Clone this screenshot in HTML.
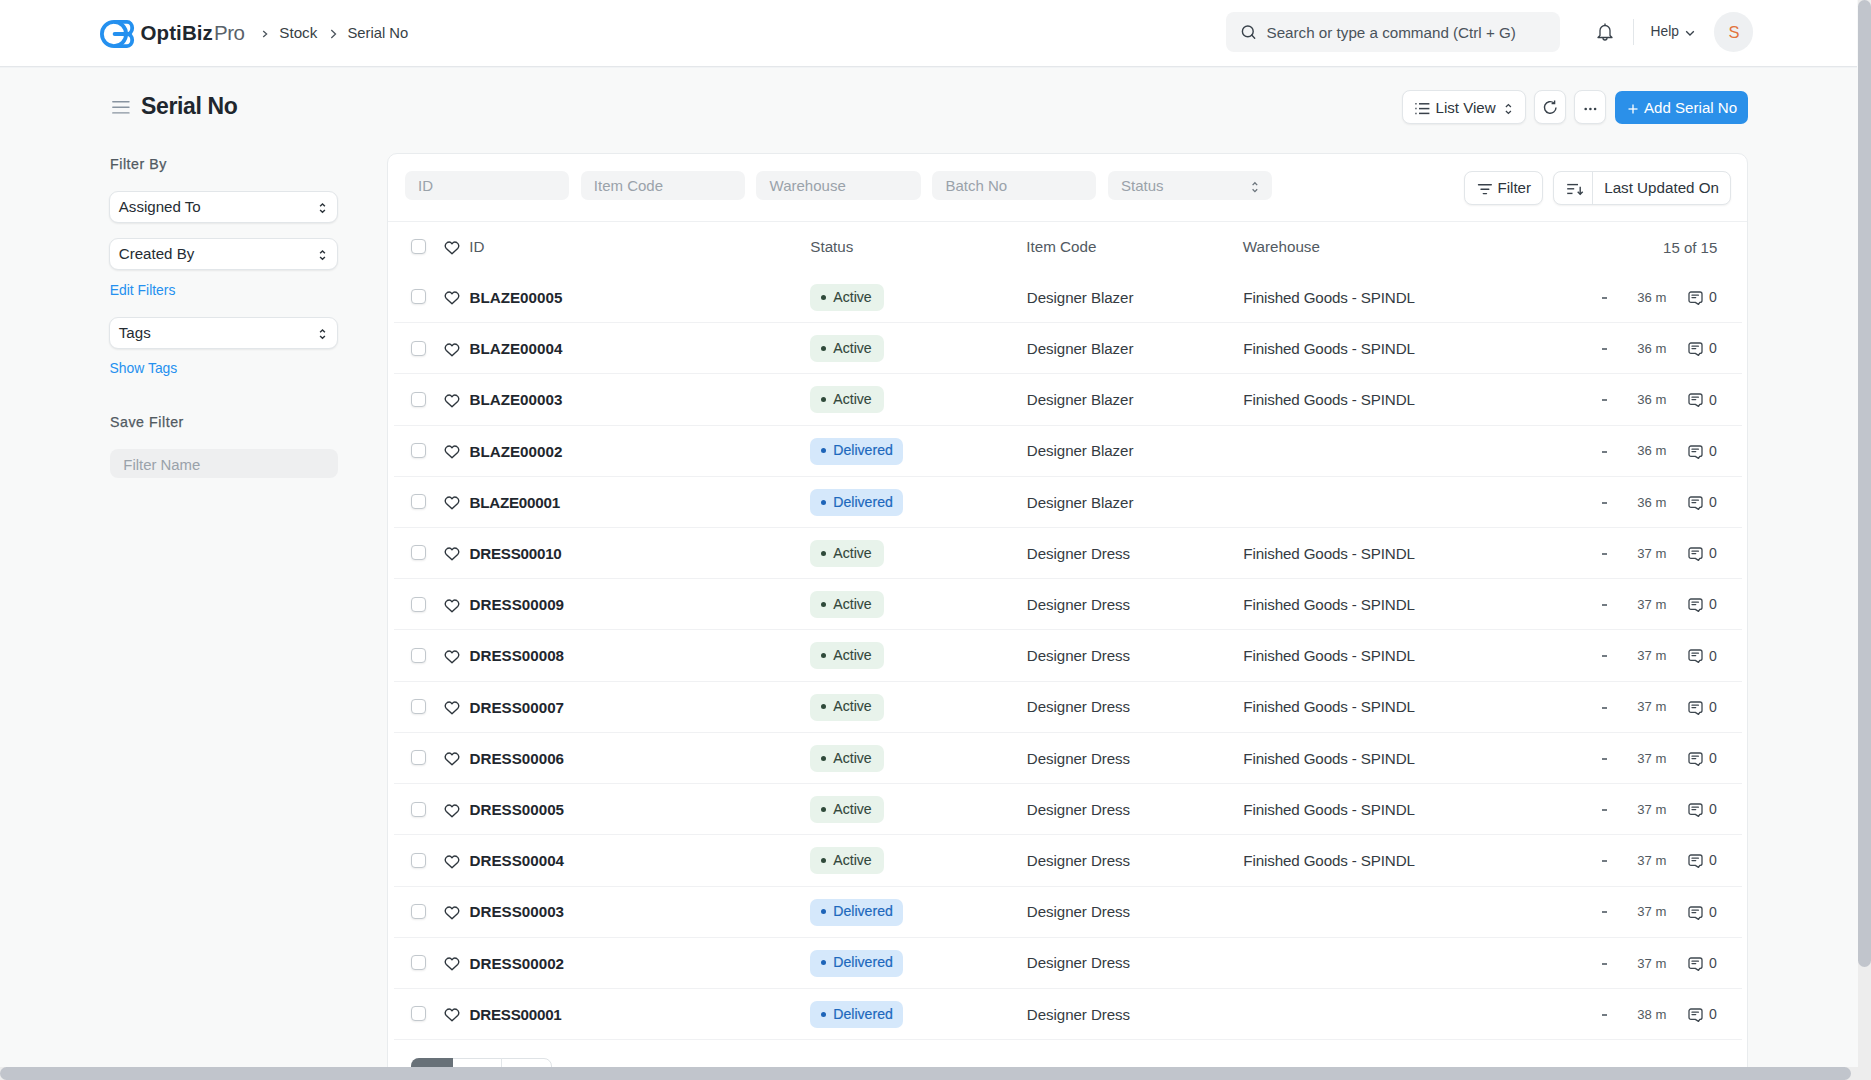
<!DOCTYPE html>
<html><head><meta charset="utf-8"><title>Serial No</title>
<style>
html,body{margin:0;padding:0;}
body{width:1871px;height:1080px;overflow:hidden;position:relative;background:#f8f9f9;font-family:"Liberation Sans", sans-serif;}
.a{position:absolute;box-sizing:border-box;}
.t{position:absolute;line-height:1;white-space:nowrap;}
svg.a{overflow:visible;}
</style></head><body>
<div class="a" style="left:0.00px;top:0.00px;width:1857.00px;height:66.00px;background:#fff;"></div>
<div class="a" style="left:0.00px;top:66.00px;width:1857.00px;height:1.00px;background:#e4e7ea;"></div>
<div class="a" style="left:0.00px;top:67.00px;width:1857.00px;height:1.00px;background:#f1f3f5;"></div>
<svg class="a" style="left:100.00px;top:20.00px;" width="35" height="28" viewBox="0 0 35 28"><g fill="none" stroke="#2490ef" stroke-width="3.8"><circle cx="14" cy="14" r="12.1"/><path d="M14 1.9 H27 A5.2 6.05 0 0 1 27 14 A5.2 6.05 0 0 1 27 26.1 H14"/><path d="M14.6 14 H30" stroke-linecap="round"/></g></svg>
<div class="t " style="left:140.50px;top:23.05px;font-size:20.5px;color:#1f272e;font-weight:bold;"><b style="letter-spacing:0.1px">OptiBiz</b><span style="font-weight:normal;color:#59626a;margin-left:1px;letter-spacing:-0.45px">Pro</span></div>
<svg class="a" style="left:262.00px;top:29.50px;" width="6" height="8" viewBox="0 0 6 8"><path d="M1.2 1 L4.6 4 L1.2 7" fill="none" stroke="#4c555d" stroke-width="1.3"/></svg>
<div class="t " style="left:279.30px;top:25.03px;font-size:15.2px;color:#383f46;font-weight:normal;">Stock</div>
<svg class="a" style="left:329.50px;top:29.00px;" width="7" height="10" viewBox="0 0 7 10"><path d="M1.3 1 L5.5 5 L1.3 9" fill="none" stroke="#4c555d" stroke-width="1.3"/></svg>
<div class="t " style="left:347.40px;top:26.07px;font-size:14.8px;color:#383f46;font-weight:normal;">Serial No</div>
<div class="a" style="left:1226.00px;top:12.00px;width:334.00px;height:40.00px;background:#f3f4f5;border-radius:8px;"></div>
<svg class="a" style="left:1241.00px;top:24.00px;" width="16" height="16" viewBox="0 0 16 16"><circle cx="6.8" cy="7.4" r="5.4" fill="none" stroke="#38414a" stroke-width="1.4"/><path d="M10.7 11.1 L13.7 14.2" stroke="#38414a" stroke-width="1.4" stroke-linecap="round"/></svg>
<div class="t " style="left:1266.50px;top:24.83px;font-size:15.2px;color:#4a535b;font-weight:normal;">Search or type a command (Ctrl + G)</div>
<svg class="a" style="left:1596.00px;top:22.00px;" width="18" height="20" viewBox="0 0 18 20"><path d="M4 13.5 V8.5 A5 5 0 0 1 14 8.5 V13.5 L16 15.5 H2 Z" fill="none" stroke="#38414a" stroke-width="1.3" stroke-linejoin="round"/><path d="M9 1.5 V3.5" stroke="#38414a" stroke-width="1.3"/><path d="M7 16 A2 2 0 0 0 11 16" fill="none" stroke="#38414a" stroke-width="1.3"/></svg>
<div class="a" style="left:1633.00px;top:19.00px;width:1.00px;height:26.00px;background:#e2e6e9;"></div>
<div class="t " style="left:1650.60px;top:25.12px;font-size:13.8px;color:#38414a;font-weight:normal;">Help</div>
<svg class="a" style="left:1685.00px;top:29.50px;" width="10" height="7" viewBox="0 0 10 7"><path d="M1.2 1.2 L5 5 L8.8 1.2" fill="none" stroke="#38414a" stroke-width="1.3"/></svg>
<div class="a" style="left:1713.50px;top:12.20px;width:39.60px;height:39.60px;background:#eef0f2;border-radius:50%;"></div>
<div class="t " style="left:1728.40px;top:24.03px;font-size:16.5px;color:#e2733d;font-weight:normal;">S</div>
<svg class="a" style="left:111.00px;top:100.00px;" width="20" height="15" viewBox="0 0 20 15"><g stroke="#8894a0" stroke-width="1.4" stroke-linecap="round"><path d="M1.8 1.8 H18"/><path d="M1.8 7.3 H18"/><path d="M1.8 12.9 H18"/></g></svg>
<div class="t " style="left:141.00px;top:94.83px;font-size:23px;color:#1f272e;font-weight:bold;letter-spacing:-0.35px;">Serial No</div>
<div class="a" style="left:1401.80px;top:90.20px;width:124.40px;height:34.20px;background:#fff;border:1px solid #e2e6e9;border-radius:8px;box-shadow:0 1px 2px rgba(0,0,0,0.06);"></div>
<svg class="a" style="left:1414.00px;top:102.00px;" width="17" height="13" viewBox="0 0 17 13"><g stroke="#38414a" stroke-width="1.5"><path d="M1.3 1.8 H2.6"/><path d="M1.3 6.6 H2.6"/><path d="M1.3 11.4 H2.6"/><path d="M5 1.8 H15.4"/><path d="M5 6.6 H15.4"/><path d="M5 11.4 H15.4"/></g></svg>
<div class="t " style="left:1435.50px;top:100.42px;font-size:15.1px;color:#2d353c;font-weight:normal;">List View</div>
<svg class="a" style="left:1504.00px;top:102.50px;" width="9" height="12" viewBox="0 0 9 12"><g fill="none" stroke="#38414a" stroke-width="1.3"><path d="M1.9 4 L4.4 1.6 L6.9 4"/><path d="M1.9 8 L4.4 10.4 L6.9 8"/></g></svg>
<div class="a" style="left:1534.20px;top:90.20px;width:32.00px;height:34.20px;background:#fff;border:1px solid #e2e6e9;border-radius:8px;box-shadow:0 1px 2px rgba(0,0,0,0.06);"></div>
<svg class="a" style="left:1542.00px;top:99.00px;" width="17" height="17" viewBox="0 0 17 17"><path d="M14 8.5 A5.8 5.8 0 1 1 11.9 4" fill="none" stroke="#38414a" stroke-width="1.4"/><path d="M12.6 1.6 V4.6 H9.6" fill="none" stroke="#38414a" stroke-width="1.4"/></svg>
<div class="a" style="left:1574.40px;top:90.20px;width:32.00px;height:34.20px;background:#fff;border:1px solid #e2e6e9;border-radius:8px;box-shadow:0 1px 2px rgba(0,0,0,0.06);"></div>
<svg class="a" style="left:1584.00px;top:106.50px;" width="13" height="4" viewBox="0 0 13 4"><g fill="#38414a"><circle cx="1.7" cy="2" r="1.3"/><circle cx="6.4" cy="2" r="1.3"/><circle cx="11.1" cy="2" r="1.3"/></g></svg>
<div class="a" style="left:1614.90px;top:90.70px;width:133.00px;height:33.30px;background:#2b90e9;border-radius:7px;"></div>
<svg class="a" style="left:1627.50px;top:104.00px;" width="10" height="10" viewBox="0 0 10 10"><g stroke="#fff" stroke-width="1.3"><path d="M5 0.5 V9.5"/><path d="M0.5 5 H9.5"/></g></svg>
<div class="t " style="left:1644.00px;top:100.32px;font-size:15.1px;color:#fff;font-weight:normal;">Add Serial No</div>
<div class="t " style="left:110.00px;top:157.28px;font-size:14.2px;color:#525a62;font-weight:normal;letter-spacing:0.55px;-webkit-text-stroke:0.25px #505a62;">Filter By</div>
<div class="a" style="left:109.30px;top:190.60px;width:229.00px;height:32.00px;background:#fff;border:1px solid #e2e6e9;border-radius:9px;box-shadow:0 1px 2px rgba(0,0,0,0.07);"></div>
<div class="t " style="left:118.80px;top:198.62px;font-size:15.1px;color:#252c33;font-weight:normal;">Assigned To</div>
<svg class="a" style="left:319.00px;top:202.60px;" width="7" height="11" viewBox="0 0 7 11"><g fill="none" stroke="#2d353c" stroke-width="1.4"><path d="M1.1 3.3 L3.5 0.9 L5.9 3.3"/><path d="M1.1 6.9 L3.5 9.3 L5.9 6.9"/></g></svg>
<div class="a" style="left:109.30px;top:238.10px;width:229.00px;height:32.00px;background:#fff;border:1px solid #e2e6e9;border-radius:9px;box-shadow:0 1px 2px rgba(0,0,0,0.07);"></div>
<div class="t " style="left:118.80px;top:246.12px;font-size:15.1px;color:#252c33;font-weight:normal;">Created By</div>
<svg class="a" style="left:319.00px;top:250.10px;" width="7" height="11" viewBox="0 0 7 11"><g fill="none" stroke="#2d353c" stroke-width="1.4"><path d="M1.1 3.3 L3.5 0.9 L5.9 3.3"/><path d="M1.1 6.9 L3.5 9.3 L5.9 6.9"/></g></svg>
<div class="t " style="left:109.80px;top:284.13px;font-size:13.9px;color:#2490ef;font-weight:normal;">Edit Filters</div>
<div class="a" style="left:109.30px;top:316.80px;width:229.00px;height:32.00px;background:#fff;border:1px solid #e2e6e9;border-radius:9px;box-shadow:0 1px 2px rgba(0,0,0,0.07);"></div>
<div class="t " style="left:118.80px;top:324.82px;font-size:15.1px;color:#252c33;font-weight:normal;">Tags</div>
<svg class="a" style="left:319.00px;top:328.80px;" width="7" height="11" viewBox="0 0 7 11"><g fill="none" stroke="#2d353c" stroke-width="1.4"><path d="M1.1 3.3 L3.5 0.9 L5.9 3.3"/><path d="M1.1 6.9 L3.5 9.3 L5.9 6.9"/></g></svg>
<div class="t " style="left:109.60px;top:362.03px;font-size:13.9px;color:#2490ef;font-weight:normal;">Show Tags</div>
<div class="t " style="left:110.00px;top:414.98px;font-size:14.2px;color:#525a62;font-weight:normal;letter-spacing:0.55px;-webkit-text-stroke:0.25px #505a62;">Save Filter</div>
<div class="a" style="left:110.00px;top:449.10px;width:228.00px;height:29.10px;background:#eeeff0;border-radius:8px;"></div>
<div class="t " style="left:123.30px;top:457.79px;font-size:14.9px;color:#9aa2aa;font-weight:normal;">Filter Name</div>
<div class="a" style="left:387.20px;top:153.30px;width:1361.00px;height:1000.00px;background:#fff;border:1px solid #e9ecee;border-radius:10px;"></div>
<div class="a" style="left:404.80px;top:171.40px;width:164.20px;height:29.00px;background:#f3f4f5;border-radius:7px;"></div>
<div class="t " style="left:418.00px;top:178.30px;font-size:15.0px;color:#9aa2aa;font-weight:normal;">ID</div>
<div class="a" style="left:580.60px;top:171.40px;width:164.20px;height:29.00px;background:#f3f4f5;border-radius:7px;"></div>
<div class="t " style="left:593.80px;top:178.30px;font-size:15.0px;color:#9aa2aa;font-weight:normal;">Item Code</div>
<div class="a" style="left:756.40px;top:171.40px;width:164.20px;height:29.00px;background:#f3f4f5;border-radius:7px;"></div>
<div class="t " style="left:769.60px;top:178.30px;font-size:15.0px;color:#9aa2aa;font-weight:normal;">Warehouse</div>
<div class="a" style="left:932.20px;top:171.40px;width:164.20px;height:29.00px;background:#f3f4f5;border-radius:7px;"></div>
<div class="t " style="left:945.40px;top:178.30px;font-size:15.0px;color:#9aa2aa;font-weight:normal;">Batch No</div>
<div class="a" style="left:1107.90px;top:171.40px;width:164.20px;height:29.00px;background:#f3f4f5;border-radius:7px;"></div>
<div class="t " style="left:1121.10px;top:178.30px;font-size:15.0px;color:#9aa2aa;font-weight:normal;">Status</div>
<svg class="a" style="left:1250.50px;top:180.80px;" width="8" height="12.5" viewBox="0 0 8 12.5"><g fill="none" stroke="#6b747c" stroke-width="1.3"><path d="M1.6 4.1 L3.9 1.7 L6.2 4.1"/><path d="M1.6 8.2 L3.9 10.6 L6.2 8.2"/></g></svg>
<div class="a" style="left:1464.00px;top:170.50px;width:79.30px;height:34.10px;background:#fff;border:1px solid #e2e6e9;border-radius:8px;box-shadow:0 1px 2px rgba(0,0,0,0.06);"></div>
<svg class="a" style="left:1476.50px;top:183.00px;" width="16" height="12" viewBox="0 0 16 12"><g stroke="#38414a" stroke-width="1.4" stroke-linecap="round"><path d="M1.5 1.7 H14.3"/><path d="M4 6.2 H11.8"/><path d="M6.3 10.6 H9.5"/></g></svg>
<div class="t " style="left:1497.50px;top:179.82px;font-size:15.1px;color:#2d353c;font-weight:normal;">Filter</div>
<div class="a" style="left:1553.40px;top:170.50px;width:177.90px;height:34.10px;background:#fff;border:1px solid #e2e6e9;border-radius:8px;box-shadow:0 1px 2px rgba(0,0,0,0.06);"></div>
<div class="a" style="left:1592.30px;top:171.00px;width:1.00px;height:33.00px;background:#e2e6e9;"></div>
<svg class="a" style="left:1565.50px;top:182.50px;" width="18" height="13" viewBox="0 0 18 13"><g stroke="#38414a" stroke-width="1.4" fill="none"><path d="M1.2 1.6 H12"/><path d="M1.2 5.8 H8.2"/><path d="M1.2 10.4 H6.5"/><path d="M14.2 3.8 V11.3"/><path d="M11.7 8.8 L14.2 11.3 L16.7 8.8"/></g></svg>
<div class="t " style="left:1604.20px;top:180.43px;font-size:15.2px;color:#2d353c;font-weight:normal;">Last Updated On</div>
<div class="a" style="left:388.00px;top:221.00px;width:1359.00px;height:1.00px;background:#eef0f2;"></div>
<div class="a" style="left:410.80px;top:239.40px;width:15.00px;height:15.00px;border:1px solid #c2c8cd;border-radius:4px;background:#fff;box-shadow:0 1px 2px rgba(0,0,0,0.08);"></div>
<svg class="a" style="left:443.60px;top:241.40px;" width="16" height="14" viewBox="0 0 16 14"><path d="M8 12.8 L2.3 7.6 C0.6 5.9 0.9 2.8 3.3 1.5 C5.1 0.6 6.9 1.3 8 2.8 C9.1 1.3 10.9 0.6 12.7 1.5 C15.1 2.8 15.4 5.9 13.7 7.6 Z" fill="none" stroke="#2d353c" stroke-width="1.4" stroke-linejoin="round"/></svg>
<div class="t " style="left:469.30px;top:239.33px;font-size:15.2px;color:#525a62;font-weight:normal;">ID</div>
<div class="t " style="left:810.30px;top:239.33px;font-size:15.2px;color:#525a62;font-weight:normal;">Status</div>
<div class="t " style="left:1026.30px;top:239.33px;font-size:15.2px;color:#525a62;font-weight:normal;">Item Code</div>
<div class="t " style="left:1242.80px;top:239.33px;font-size:15.2px;color:#525a62;font-weight:normal;">Warehouse</div>
<div class="t" style="right:153.70px;top:239.50px;font-size:15.0px;color:#525a62;font-weight:normal;">15 of 15</div>
<div class="a" style="left:410.80px;top:289.40px;width:15.00px;height:15.00px;border:1px solid #c2c8cd;border-radius:4px;background:#fff;box-shadow:0 1px 2px rgba(0,0,0,0.08);"></div>
<svg class="a" style="left:443.60px;top:291.40px;" width="16" height="14" viewBox="0 0 16 14"><path d="M8 12.8 L2.3 7.6 C0.6 5.9 0.9 2.8 3.3 1.5 C5.1 0.6 6.9 1.3 8 2.8 C9.1 1.3 10.9 0.6 12.7 1.5 C15.1 2.8 15.4 5.9 13.7 7.6 Z" fill="none" stroke="#2d353c" stroke-width="1.4" stroke-linejoin="round"/></svg>
<div class="t " style="left:469.50px;top:289.93px;font-size:15.2px;color:#1f272e;font-weight:bold;">BLAZE00005</div>
<div class="a" style="left:810.20px;top:284.00px;width:74.00px;height:27.00px;background:#e8f3eb;border-radius:7px;"></div>
<div class="a" style="left:821.10px;top:294.70px;width:5.00px;height:5.00px;background:#2f4a3a;border-radius:50%;"></div>
<div class="t " style="left:833.30px;top:289.76px;font-size:14.1px;color:#33473b;font-weight:normal;-webkit-text-stroke:0.1px #33473b;">Active</div>
<div class="t " style="left:1026.80px;top:289.72px;font-size:15.1px;color:#343b42;font-weight:normal;letter-spacing:-0.05px;">Designer Blazer</div>
<div class="t " style="left:1243.30px;top:289.73px;font-size:15.2px;color:#343b42;font-weight:normal;letter-spacing:-0.14px;">Finished Goods - SPINDL</div>
<div class="a" style="left:1602.00px;top:297.00px;width:5.00px;height:2.00px;background:#737b82;"></div>
<div class="t " style="left:1637.20px;top:290.81px;font-size:13.1px;color:#525a62;font-weight:normal;">36 m</div>
<svg class="a" style="left:1687.00px;top:290.00px;" width="17" height="16" viewBox="0 0 17 16"><path d="M4 2 H13 A2 2 0 0 1 15 4 V10.4 A2 2 0 0 1 13 12.4 H12.8 L11.5 14.4 L8.3 12.4 H4 A2 2 0 0 1 2 10.4 V4 A2 2 0 0 1 4 2 Z" fill="none" stroke="#3f4850" stroke-width="1.3" stroke-linejoin="round"/><g stroke="#3f4850" stroke-width="1.3" stroke-linecap="round"><path d="M5 5.2 H11.4"/><path d="M5 7.6 H8.7"/></g></svg>
<div class="t " style="left:1708.90px;top:290.16px;font-size:14.1px;color:#3f4850;font-weight:normal;">0</div>
<div class="a" style="left:394.00px;top:322.20px;width:1348.00px;height:1.00px;background:#f0f1f3;"></div>
<div class="a" style="left:410.80px;top:340.61px;width:15.00px;height:15.00px;border:1px solid #c2c8cd;border-radius:4px;background:#fff;box-shadow:0 1px 2px rgba(0,0,0,0.08);"></div>
<svg class="a" style="left:443.60px;top:342.61px;" width="16" height="14" viewBox="0 0 16 14"><path d="M8 12.8 L2.3 7.6 C0.6 5.9 0.9 2.8 3.3 1.5 C5.1 0.6 6.9 1.3 8 2.8 C9.1 1.3 10.9 0.6 12.7 1.5 C15.1 2.8 15.4 5.9 13.7 7.6 Z" fill="none" stroke="#2d353c" stroke-width="1.4" stroke-linejoin="round"/></svg>
<div class="t " style="left:469.50px;top:341.14px;font-size:15.2px;color:#1f272e;font-weight:bold;">BLAZE00004</div>
<div class="a" style="left:810.20px;top:335.21px;width:74.00px;height:27.00px;background:#e8f3eb;border-radius:7px;"></div>
<div class="a" style="left:821.10px;top:345.91px;width:5.00px;height:5.00px;background:#2f4a3a;border-radius:50%;"></div>
<div class="t " style="left:833.30px;top:340.97px;font-size:14.1px;color:#33473b;font-weight:normal;-webkit-text-stroke:0.1px #33473b;">Active</div>
<div class="t " style="left:1026.80px;top:340.93px;font-size:15.1px;color:#343b42;font-weight:normal;letter-spacing:-0.05px;">Designer Blazer</div>
<div class="t " style="left:1243.30px;top:340.94px;font-size:15.2px;color:#343b42;font-weight:normal;letter-spacing:-0.14px;">Finished Goods - SPINDL</div>
<div class="a" style="left:1602.00px;top:348.00px;width:5.00px;height:2.00px;background:#737b82;"></div>
<div class="t " style="left:1637.20px;top:342.02px;font-size:13.1px;color:#525a62;font-weight:normal;">36 m</div>
<svg class="a" style="left:1687.00px;top:341.21px;" width="17" height="16" viewBox="0 0 17 16"><path d="M4 2 H13 A2 2 0 0 1 15 4 V10.4 A2 2 0 0 1 13 12.4 H12.8 L11.5 14.4 L8.3 12.4 H4 A2 2 0 0 1 2 10.4 V4 A2 2 0 0 1 4 2 Z" fill="none" stroke="#3f4850" stroke-width="1.3" stroke-linejoin="round"/><g stroke="#3f4850" stroke-width="1.3" stroke-linecap="round"><path d="M5 5.2 H11.4"/><path d="M5 7.6 H8.7"/></g></svg>
<div class="t " style="left:1708.90px;top:341.37px;font-size:14.1px;color:#3f4850;font-weight:normal;">0</div>
<div class="a" style="left:394.00px;top:373.41px;width:1348.00px;height:1.00px;background:#f0f1f3;"></div>
<div class="a" style="left:410.80px;top:391.82px;width:15.00px;height:15.00px;border:1px solid #c2c8cd;border-radius:4px;background:#fff;box-shadow:0 1px 2px rgba(0,0,0,0.08);"></div>
<svg class="a" style="left:443.60px;top:393.82px;" width="16" height="14" viewBox="0 0 16 14"><path d="M8 12.8 L2.3 7.6 C0.6 5.9 0.9 2.8 3.3 1.5 C5.1 0.6 6.9 1.3 8 2.8 C9.1 1.3 10.9 0.6 12.7 1.5 C15.1 2.8 15.4 5.9 13.7 7.6 Z" fill="none" stroke="#2d353c" stroke-width="1.4" stroke-linejoin="round"/></svg>
<div class="t " style="left:469.50px;top:392.35px;font-size:15.2px;color:#1f272e;font-weight:bold;">BLAZE00003</div>
<div class="a" style="left:810.20px;top:386.42px;width:74.00px;height:27.00px;background:#e8f3eb;border-radius:7px;"></div>
<div class="a" style="left:821.10px;top:397.12px;width:5.00px;height:5.00px;background:#2f4a3a;border-radius:50%;"></div>
<div class="t " style="left:833.30px;top:392.18px;font-size:14.1px;color:#33473b;font-weight:normal;-webkit-text-stroke:0.1px #33473b;">Active</div>
<div class="t " style="left:1026.80px;top:392.14px;font-size:15.1px;color:#343b42;font-weight:normal;letter-spacing:-0.05px;">Designer Blazer</div>
<div class="t " style="left:1243.30px;top:392.15px;font-size:15.2px;color:#343b42;font-weight:normal;letter-spacing:-0.14px;">Finished Goods - SPINDL</div>
<div class="a" style="left:1602.00px;top:399.00px;width:5.00px;height:2.00px;background:#737b82;"></div>
<div class="t " style="left:1637.20px;top:393.23px;font-size:13.1px;color:#525a62;font-weight:normal;">36 m</div>
<svg class="a" style="left:1687.00px;top:392.42px;" width="17" height="16" viewBox="0 0 17 16"><path d="M4 2 H13 A2 2 0 0 1 15 4 V10.4 A2 2 0 0 1 13 12.4 H12.8 L11.5 14.4 L8.3 12.4 H4 A2 2 0 0 1 2 10.4 V4 A2 2 0 0 1 4 2 Z" fill="none" stroke="#3f4850" stroke-width="1.3" stroke-linejoin="round"/><g stroke="#3f4850" stroke-width="1.3" stroke-linecap="round"><path d="M5 5.2 H11.4"/><path d="M5 7.6 H8.7"/></g></svg>
<div class="t " style="left:1708.90px;top:392.58px;font-size:14.1px;color:#3f4850;font-weight:normal;">0</div>
<div class="a" style="left:394.00px;top:424.62px;width:1348.00px;height:1.00px;background:#f0f1f3;"></div>
<div class="a" style="left:410.80px;top:443.03px;width:15.00px;height:15.00px;border:1px solid #c2c8cd;border-radius:4px;background:#fff;box-shadow:0 1px 2px rgba(0,0,0,0.08);"></div>
<svg class="a" style="left:443.60px;top:445.03px;" width="16" height="14" viewBox="0 0 16 14"><path d="M8 12.8 L2.3 7.6 C0.6 5.9 0.9 2.8 3.3 1.5 C5.1 0.6 6.9 1.3 8 2.8 C9.1 1.3 10.9 0.6 12.7 1.5 C15.1 2.8 15.4 5.9 13.7 7.6 Z" fill="none" stroke="#2d353c" stroke-width="1.4" stroke-linejoin="round"/></svg>
<div class="t " style="left:469.50px;top:443.56px;font-size:15.2px;color:#1f272e;font-weight:bold;">BLAZE00002</div>
<div class="a" style="left:810.20px;top:437.63px;width:93.30px;height:27.00px;background:#d5e8fb;border-radius:7px;"></div>
<div class="a" style="left:821.10px;top:448.33px;width:5.00px;height:5.00px;background:#1d64b8;border-radius:50%;"></div>
<div class="t " style="left:833.30px;top:443.39px;font-size:14.1px;color:#1d68bd;font-weight:normal;-webkit-text-stroke:0.2px #1d68bd;">Delivered</div>
<div class="t " style="left:1026.80px;top:443.35px;font-size:15.1px;color:#343b42;font-weight:normal;letter-spacing:-0.05px;">Designer Blazer</div>
<div class="a" style="left:1602.00px;top:451.00px;width:5.00px;height:2.00px;background:#737b82;"></div>
<div class="t " style="left:1637.20px;top:444.44px;font-size:13.1px;color:#525a62;font-weight:normal;">36 m</div>
<svg class="a" style="left:1687.00px;top:443.63px;" width="17" height="16" viewBox="0 0 17 16"><path d="M4 2 H13 A2 2 0 0 1 15 4 V10.4 A2 2 0 0 1 13 12.4 H12.8 L11.5 14.4 L8.3 12.4 H4 A2 2 0 0 1 2 10.4 V4 A2 2 0 0 1 4 2 Z" fill="none" stroke="#3f4850" stroke-width="1.3" stroke-linejoin="round"/><g stroke="#3f4850" stroke-width="1.3" stroke-linecap="round"><path d="M5 5.2 H11.4"/><path d="M5 7.6 H8.7"/></g></svg>
<div class="t " style="left:1708.90px;top:443.79px;font-size:14.1px;color:#3f4850;font-weight:normal;">0</div>
<div class="a" style="left:394.00px;top:475.83px;width:1348.00px;height:1.00px;background:#f0f1f3;"></div>
<div class="a" style="left:410.80px;top:494.24px;width:15.00px;height:15.00px;border:1px solid #c2c8cd;border-radius:4px;background:#fff;box-shadow:0 1px 2px rgba(0,0,0,0.08);"></div>
<svg class="a" style="left:443.60px;top:496.24px;" width="16" height="14" viewBox="0 0 16 14"><path d="M8 12.8 L2.3 7.6 C0.6 5.9 0.9 2.8 3.3 1.5 C5.1 0.6 6.9 1.3 8 2.8 C9.1 1.3 10.9 0.6 12.7 1.5 C15.1 2.8 15.4 5.9 13.7 7.6 Z" fill="none" stroke="#2d353c" stroke-width="1.4" stroke-linejoin="round"/></svg>
<div class="t " style="left:469.50px;top:494.77px;font-size:15.2px;color:#1f272e;font-weight:bold;letter-spacing:-0.25px;">BLAZE00001</div>
<div class="a" style="left:810.20px;top:488.84px;width:93.30px;height:27.00px;background:#d5e8fb;border-radius:7px;"></div>
<div class="a" style="left:821.10px;top:499.54px;width:5.00px;height:5.00px;background:#1d64b8;border-radius:50%;"></div>
<div class="t " style="left:833.30px;top:494.60px;font-size:14.1px;color:#1d68bd;font-weight:normal;-webkit-text-stroke:0.2px #1d68bd;">Delivered</div>
<div class="t " style="left:1026.80px;top:494.56px;font-size:15.1px;color:#343b42;font-weight:normal;letter-spacing:-0.05px;">Designer Blazer</div>
<div class="a" style="left:1602.00px;top:502.00px;width:5.00px;height:2.00px;background:#737b82;"></div>
<div class="t " style="left:1637.20px;top:495.65px;font-size:13.1px;color:#525a62;font-weight:normal;">36 m</div>
<svg class="a" style="left:1687.00px;top:494.84px;" width="17" height="16" viewBox="0 0 17 16"><path d="M4 2 H13 A2 2 0 0 1 15 4 V10.4 A2 2 0 0 1 13 12.4 H12.8 L11.5 14.4 L8.3 12.4 H4 A2 2 0 0 1 2 10.4 V4 A2 2 0 0 1 4 2 Z" fill="none" stroke="#3f4850" stroke-width="1.3" stroke-linejoin="round"/><g stroke="#3f4850" stroke-width="1.3" stroke-linecap="round"><path d="M5 5.2 H11.4"/><path d="M5 7.6 H8.7"/></g></svg>
<div class="t " style="left:1708.90px;top:495.00px;font-size:14.1px;color:#3f4850;font-weight:normal;">0</div>
<div class="a" style="left:394.00px;top:527.04px;width:1348.00px;height:1.00px;background:#f0f1f3;"></div>
<div class="a" style="left:410.80px;top:545.45px;width:15.00px;height:15.00px;border:1px solid #c2c8cd;border-radius:4px;background:#fff;box-shadow:0 1px 2px rgba(0,0,0,0.08);"></div>
<svg class="a" style="left:443.60px;top:547.45px;" width="16" height="14" viewBox="0 0 16 14"><path d="M8 12.8 L2.3 7.6 C0.6 5.9 0.9 2.8 3.3 1.5 C5.1 0.6 6.9 1.3 8 2.8 C9.1 1.3 10.9 0.6 12.7 1.5 C15.1 2.8 15.4 5.9 13.7 7.6 Z" fill="none" stroke="#2d353c" stroke-width="1.4" stroke-linejoin="round"/></svg>
<div class="t " style="left:469.50px;top:545.98px;font-size:15.2px;color:#1f272e;font-weight:bold;letter-spacing:-0.25px;">DRESS00010</div>
<div class="a" style="left:810.20px;top:540.05px;width:74.00px;height:27.00px;background:#e8f3eb;border-radius:7px;"></div>
<div class="a" style="left:821.10px;top:550.75px;width:5.00px;height:5.00px;background:#2f4a3a;border-radius:50%;"></div>
<div class="t " style="left:833.30px;top:545.81px;font-size:14.1px;color:#33473b;font-weight:normal;-webkit-text-stroke:0.1px #33473b;">Active</div>
<div class="t " style="left:1026.80px;top:545.77px;font-size:15.1px;color:#343b42;font-weight:normal;letter-spacing:-0.05px;">Designer Dress</div>
<div class="t " style="left:1243.30px;top:545.78px;font-size:15.2px;color:#343b42;font-weight:normal;letter-spacing:-0.14px;">Finished Goods - SPINDL</div>
<div class="a" style="left:1602.00px;top:553.00px;width:5.00px;height:2.00px;background:#737b82;"></div>
<div class="t " style="left:1637.20px;top:546.86px;font-size:13.1px;color:#525a62;font-weight:normal;">37 m</div>
<svg class="a" style="left:1687.00px;top:546.05px;" width="17" height="16" viewBox="0 0 17 16"><path d="M4 2 H13 A2 2 0 0 1 15 4 V10.4 A2 2 0 0 1 13 12.4 H12.8 L11.5 14.4 L8.3 12.4 H4 A2 2 0 0 1 2 10.4 V4 A2 2 0 0 1 4 2 Z" fill="none" stroke="#3f4850" stroke-width="1.3" stroke-linejoin="round"/><g stroke="#3f4850" stroke-width="1.3" stroke-linecap="round"><path d="M5 5.2 H11.4"/><path d="M5 7.6 H8.7"/></g></svg>
<div class="t " style="left:1708.90px;top:546.21px;font-size:14.1px;color:#3f4850;font-weight:normal;">0</div>
<div class="a" style="left:394.00px;top:578.25px;width:1348.00px;height:1.00px;background:#f0f1f3;"></div>
<div class="a" style="left:410.80px;top:596.66px;width:15.00px;height:15.00px;border:1px solid #c2c8cd;border-radius:4px;background:#fff;box-shadow:0 1px 2px rgba(0,0,0,0.08);"></div>
<svg class="a" style="left:443.60px;top:598.66px;" width="16" height="14" viewBox="0 0 16 14"><path d="M8 12.8 L2.3 7.6 C0.6 5.9 0.9 2.8 3.3 1.5 C5.1 0.6 6.9 1.3 8 2.8 C9.1 1.3 10.9 0.6 12.7 1.5 C15.1 2.8 15.4 5.9 13.7 7.6 Z" fill="none" stroke="#2d353c" stroke-width="1.4" stroke-linejoin="round"/></svg>
<div class="t " style="left:469.50px;top:597.19px;font-size:15.2px;color:#1f272e;font-weight:bold;">DRESS00009</div>
<div class="a" style="left:810.20px;top:591.26px;width:74.00px;height:27.00px;background:#e8f3eb;border-radius:7px;"></div>
<div class="a" style="left:821.10px;top:601.96px;width:5.00px;height:5.00px;background:#2f4a3a;border-radius:50%;"></div>
<div class="t " style="left:833.30px;top:597.02px;font-size:14.1px;color:#33473b;font-weight:normal;-webkit-text-stroke:0.1px #33473b;">Active</div>
<div class="t " style="left:1026.80px;top:596.98px;font-size:15.1px;color:#343b42;font-weight:normal;letter-spacing:-0.05px;">Designer Dress</div>
<div class="t " style="left:1243.30px;top:596.99px;font-size:15.2px;color:#343b42;font-weight:normal;letter-spacing:-0.14px;">Finished Goods - SPINDL</div>
<div class="a" style="left:1602.00px;top:604.00px;width:5.00px;height:2.00px;background:#737b82;"></div>
<div class="t " style="left:1637.20px;top:598.07px;font-size:13.1px;color:#525a62;font-weight:normal;">37 m</div>
<svg class="a" style="left:1687.00px;top:597.26px;" width="17" height="16" viewBox="0 0 17 16"><path d="M4 2 H13 A2 2 0 0 1 15 4 V10.4 A2 2 0 0 1 13 12.4 H12.8 L11.5 14.4 L8.3 12.4 H4 A2 2 0 0 1 2 10.4 V4 A2 2 0 0 1 4 2 Z" fill="none" stroke="#3f4850" stroke-width="1.3" stroke-linejoin="round"/><g stroke="#3f4850" stroke-width="1.3" stroke-linecap="round"><path d="M5 5.2 H11.4"/><path d="M5 7.6 H8.7"/></g></svg>
<div class="t " style="left:1708.90px;top:597.42px;font-size:14.1px;color:#3f4850;font-weight:normal;">0</div>
<div class="a" style="left:394.00px;top:629.46px;width:1348.00px;height:1.00px;background:#f0f1f3;"></div>
<div class="a" style="left:410.80px;top:647.87px;width:15.00px;height:15.00px;border:1px solid #c2c8cd;border-radius:4px;background:#fff;box-shadow:0 1px 2px rgba(0,0,0,0.08);"></div>
<svg class="a" style="left:443.60px;top:649.87px;" width="16" height="14" viewBox="0 0 16 14"><path d="M8 12.8 L2.3 7.6 C0.6 5.9 0.9 2.8 3.3 1.5 C5.1 0.6 6.9 1.3 8 2.8 C9.1 1.3 10.9 0.6 12.7 1.5 C15.1 2.8 15.4 5.9 13.7 7.6 Z" fill="none" stroke="#2d353c" stroke-width="1.4" stroke-linejoin="round"/></svg>
<div class="t " style="left:469.50px;top:648.40px;font-size:15.2px;color:#1f272e;font-weight:bold;">DRESS00008</div>
<div class="a" style="left:810.20px;top:642.47px;width:74.00px;height:27.00px;background:#e8f3eb;border-radius:7px;"></div>
<div class="a" style="left:821.10px;top:653.17px;width:5.00px;height:5.00px;background:#2f4a3a;border-radius:50%;"></div>
<div class="t " style="left:833.30px;top:648.23px;font-size:14.1px;color:#33473b;font-weight:normal;-webkit-text-stroke:0.1px #33473b;">Active</div>
<div class="t " style="left:1026.80px;top:648.19px;font-size:15.1px;color:#343b42;font-weight:normal;letter-spacing:-0.05px;">Designer Dress</div>
<div class="t " style="left:1243.30px;top:648.20px;font-size:15.2px;color:#343b42;font-weight:normal;letter-spacing:-0.14px;">Finished Goods - SPINDL</div>
<div class="a" style="left:1602.00px;top:655.00px;width:5.00px;height:2.00px;background:#737b82;"></div>
<div class="t " style="left:1637.20px;top:649.28px;font-size:13.1px;color:#525a62;font-weight:normal;">37 m</div>
<svg class="a" style="left:1687.00px;top:648.47px;" width="17" height="16" viewBox="0 0 17 16"><path d="M4 2 H13 A2 2 0 0 1 15 4 V10.4 A2 2 0 0 1 13 12.4 H12.8 L11.5 14.4 L8.3 12.4 H4 A2 2 0 0 1 2 10.4 V4 A2 2 0 0 1 4 2 Z" fill="none" stroke="#3f4850" stroke-width="1.3" stroke-linejoin="round"/><g stroke="#3f4850" stroke-width="1.3" stroke-linecap="round"><path d="M5 5.2 H11.4"/><path d="M5 7.6 H8.7"/></g></svg>
<div class="t " style="left:1708.90px;top:648.63px;font-size:14.1px;color:#3f4850;font-weight:normal;">0</div>
<div class="a" style="left:394.00px;top:680.67px;width:1348.00px;height:1.00px;background:#f0f1f3;"></div>
<div class="a" style="left:410.80px;top:699.08px;width:15.00px;height:15.00px;border:1px solid #c2c8cd;border-radius:4px;background:#fff;box-shadow:0 1px 2px rgba(0,0,0,0.08);"></div>
<svg class="a" style="left:443.60px;top:701.08px;" width="16" height="14" viewBox="0 0 16 14"><path d="M8 12.8 L2.3 7.6 C0.6 5.9 0.9 2.8 3.3 1.5 C5.1 0.6 6.9 1.3 8 2.8 C9.1 1.3 10.9 0.6 12.7 1.5 C15.1 2.8 15.4 5.9 13.7 7.6 Z" fill="none" stroke="#2d353c" stroke-width="1.4" stroke-linejoin="round"/></svg>
<div class="t " style="left:469.50px;top:699.61px;font-size:15.2px;color:#1f272e;font-weight:bold;">DRESS00007</div>
<div class="a" style="left:810.20px;top:693.68px;width:74.00px;height:27.00px;background:#e8f3eb;border-radius:7px;"></div>
<div class="a" style="left:821.10px;top:704.38px;width:5.00px;height:5.00px;background:#2f4a3a;border-radius:50%;"></div>
<div class="t " style="left:833.30px;top:699.44px;font-size:14.1px;color:#33473b;font-weight:normal;-webkit-text-stroke:0.1px #33473b;">Active</div>
<div class="t " style="left:1026.80px;top:699.40px;font-size:15.1px;color:#343b42;font-weight:normal;letter-spacing:-0.05px;">Designer Dress</div>
<div class="t " style="left:1243.30px;top:699.41px;font-size:15.2px;color:#343b42;font-weight:normal;letter-spacing:-0.14px;">Finished Goods - SPINDL</div>
<div class="a" style="left:1602.00px;top:707.00px;width:5.00px;height:2.00px;background:#737b82;"></div>
<div class="t " style="left:1637.20px;top:700.49px;font-size:13.1px;color:#525a62;font-weight:normal;">37 m</div>
<svg class="a" style="left:1687.00px;top:699.68px;" width="17" height="16" viewBox="0 0 17 16"><path d="M4 2 H13 A2 2 0 0 1 15 4 V10.4 A2 2 0 0 1 13 12.4 H12.8 L11.5 14.4 L8.3 12.4 H4 A2 2 0 0 1 2 10.4 V4 A2 2 0 0 1 4 2 Z" fill="none" stroke="#3f4850" stroke-width="1.3" stroke-linejoin="round"/><g stroke="#3f4850" stroke-width="1.3" stroke-linecap="round"><path d="M5 5.2 H11.4"/><path d="M5 7.6 H8.7"/></g></svg>
<div class="t " style="left:1708.90px;top:699.84px;font-size:14.1px;color:#3f4850;font-weight:normal;">0</div>
<div class="a" style="left:394.00px;top:731.88px;width:1348.00px;height:1.00px;background:#f0f1f3;"></div>
<div class="a" style="left:410.80px;top:750.29px;width:15.00px;height:15.00px;border:1px solid #c2c8cd;border-radius:4px;background:#fff;box-shadow:0 1px 2px rgba(0,0,0,0.08);"></div>
<svg class="a" style="left:443.60px;top:752.29px;" width="16" height="14" viewBox="0 0 16 14"><path d="M8 12.8 L2.3 7.6 C0.6 5.9 0.9 2.8 3.3 1.5 C5.1 0.6 6.9 1.3 8 2.8 C9.1 1.3 10.9 0.6 12.7 1.5 C15.1 2.8 15.4 5.9 13.7 7.6 Z" fill="none" stroke="#2d353c" stroke-width="1.4" stroke-linejoin="round"/></svg>
<div class="t " style="left:469.50px;top:750.82px;font-size:15.2px;color:#1f272e;font-weight:bold;">DRESS00006</div>
<div class="a" style="left:810.20px;top:744.89px;width:74.00px;height:27.00px;background:#e8f3eb;border-radius:7px;"></div>
<div class="a" style="left:821.10px;top:755.59px;width:5.00px;height:5.00px;background:#2f4a3a;border-radius:50%;"></div>
<div class="t " style="left:833.30px;top:750.65px;font-size:14.1px;color:#33473b;font-weight:normal;-webkit-text-stroke:0.1px #33473b;">Active</div>
<div class="t " style="left:1026.80px;top:750.61px;font-size:15.1px;color:#343b42;font-weight:normal;letter-spacing:-0.05px;">Designer Dress</div>
<div class="t " style="left:1243.30px;top:750.62px;font-size:15.2px;color:#343b42;font-weight:normal;letter-spacing:-0.14px;">Finished Goods - SPINDL</div>
<div class="a" style="left:1602.00px;top:758.00px;width:5.00px;height:2.00px;background:#737b82;"></div>
<div class="t " style="left:1637.20px;top:751.70px;font-size:13.1px;color:#525a62;font-weight:normal;">37 m</div>
<svg class="a" style="left:1687.00px;top:750.89px;" width="17" height="16" viewBox="0 0 17 16"><path d="M4 2 H13 A2 2 0 0 1 15 4 V10.4 A2 2 0 0 1 13 12.4 H12.8 L11.5 14.4 L8.3 12.4 H4 A2 2 0 0 1 2 10.4 V4 A2 2 0 0 1 4 2 Z" fill="none" stroke="#3f4850" stroke-width="1.3" stroke-linejoin="round"/><g stroke="#3f4850" stroke-width="1.3" stroke-linecap="round"><path d="M5 5.2 H11.4"/><path d="M5 7.6 H8.7"/></g></svg>
<div class="t " style="left:1708.90px;top:751.05px;font-size:14.1px;color:#3f4850;font-weight:normal;">0</div>
<div class="a" style="left:394.00px;top:783.09px;width:1348.00px;height:1.00px;background:#f0f1f3;"></div>
<div class="a" style="left:410.80px;top:801.50px;width:15.00px;height:15.00px;border:1px solid #c2c8cd;border-radius:4px;background:#fff;box-shadow:0 1px 2px rgba(0,0,0,0.08);"></div>
<svg class="a" style="left:443.60px;top:803.50px;" width="16" height="14" viewBox="0 0 16 14"><path d="M8 12.8 L2.3 7.6 C0.6 5.9 0.9 2.8 3.3 1.5 C5.1 0.6 6.9 1.3 8 2.8 C9.1 1.3 10.9 0.6 12.7 1.5 C15.1 2.8 15.4 5.9 13.7 7.6 Z" fill="none" stroke="#2d353c" stroke-width="1.4" stroke-linejoin="round"/></svg>
<div class="t " style="left:469.50px;top:802.03px;font-size:15.2px;color:#1f272e;font-weight:bold;">DRESS00005</div>
<div class="a" style="left:810.20px;top:796.10px;width:74.00px;height:27.00px;background:#e8f3eb;border-radius:7px;"></div>
<div class="a" style="left:821.10px;top:806.80px;width:5.00px;height:5.00px;background:#2f4a3a;border-radius:50%;"></div>
<div class="t " style="left:833.30px;top:801.86px;font-size:14.1px;color:#33473b;font-weight:normal;-webkit-text-stroke:0.1px #33473b;">Active</div>
<div class="t " style="left:1026.80px;top:801.82px;font-size:15.1px;color:#343b42;font-weight:normal;letter-spacing:-0.05px;">Designer Dress</div>
<div class="t " style="left:1243.30px;top:801.83px;font-size:15.2px;color:#343b42;font-weight:normal;letter-spacing:-0.14px;">Finished Goods - SPINDL</div>
<div class="a" style="left:1602.00px;top:809.00px;width:5.00px;height:2.00px;background:#737b82;"></div>
<div class="t " style="left:1637.20px;top:802.91px;font-size:13.1px;color:#525a62;font-weight:normal;">37 m</div>
<svg class="a" style="left:1687.00px;top:802.10px;" width="17" height="16" viewBox="0 0 17 16"><path d="M4 2 H13 A2 2 0 0 1 15 4 V10.4 A2 2 0 0 1 13 12.4 H12.8 L11.5 14.4 L8.3 12.4 H4 A2 2 0 0 1 2 10.4 V4 A2 2 0 0 1 4 2 Z" fill="none" stroke="#3f4850" stroke-width="1.3" stroke-linejoin="round"/><g stroke="#3f4850" stroke-width="1.3" stroke-linecap="round"><path d="M5 5.2 H11.4"/><path d="M5 7.6 H8.7"/></g></svg>
<div class="t " style="left:1708.90px;top:802.26px;font-size:14.1px;color:#3f4850;font-weight:normal;">0</div>
<div class="a" style="left:394.00px;top:834.30px;width:1348.00px;height:1.00px;background:#f0f1f3;"></div>
<div class="a" style="left:410.80px;top:852.71px;width:15.00px;height:15.00px;border:1px solid #c2c8cd;border-radius:4px;background:#fff;box-shadow:0 1px 2px rgba(0,0,0,0.08);"></div>
<svg class="a" style="left:443.60px;top:854.71px;" width="16" height="14" viewBox="0 0 16 14"><path d="M8 12.8 L2.3 7.6 C0.6 5.9 0.9 2.8 3.3 1.5 C5.1 0.6 6.9 1.3 8 2.8 C9.1 1.3 10.9 0.6 12.7 1.5 C15.1 2.8 15.4 5.9 13.7 7.6 Z" fill="none" stroke="#2d353c" stroke-width="1.4" stroke-linejoin="round"/></svg>
<div class="t " style="left:469.50px;top:853.24px;font-size:15.2px;color:#1f272e;font-weight:bold;">DRESS00004</div>
<div class="a" style="left:810.20px;top:847.31px;width:74.00px;height:27.00px;background:#e8f3eb;border-radius:7px;"></div>
<div class="a" style="left:821.10px;top:858.01px;width:5.00px;height:5.00px;background:#2f4a3a;border-radius:50%;"></div>
<div class="t " style="left:833.30px;top:853.07px;font-size:14.1px;color:#33473b;font-weight:normal;-webkit-text-stroke:0.1px #33473b;">Active</div>
<div class="t " style="left:1026.80px;top:853.03px;font-size:15.1px;color:#343b42;font-weight:normal;letter-spacing:-0.05px;">Designer Dress</div>
<div class="t " style="left:1243.30px;top:853.04px;font-size:15.2px;color:#343b42;font-weight:normal;letter-spacing:-0.14px;">Finished Goods - SPINDL</div>
<div class="a" style="left:1602.00px;top:860.00px;width:5.00px;height:2.00px;background:#737b82;"></div>
<div class="t " style="left:1637.20px;top:854.12px;font-size:13.1px;color:#525a62;font-weight:normal;">37 m</div>
<svg class="a" style="left:1687.00px;top:853.31px;" width="17" height="16" viewBox="0 0 17 16"><path d="M4 2 H13 A2 2 0 0 1 15 4 V10.4 A2 2 0 0 1 13 12.4 H12.8 L11.5 14.4 L8.3 12.4 H4 A2 2 0 0 1 2 10.4 V4 A2 2 0 0 1 4 2 Z" fill="none" stroke="#3f4850" stroke-width="1.3" stroke-linejoin="round"/><g stroke="#3f4850" stroke-width="1.3" stroke-linecap="round"><path d="M5 5.2 H11.4"/><path d="M5 7.6 H8.7"/></g></svg>
<div class="t " style="left:1708.90px;top:853.47px;font-size:14.1px;color:#3f4850;font-weight:normal;">0</div>
<div class="a" style="left:394.00px;top:885.51px;width:1348.00px;height:1.00px;background:#f0f1f3;"></div>
<div class="a" style="left:410.80px;top:903.92px;width:15.00px;height:15.00px;border:1px solid #c2c8cd;border-radius:4px;background:#fff;box-shadow:0 1px 2px rgba(0,0,0,0.08);"></div>
<svg class="a" style="left:443.60px;top:905.92px;" width="16" height="14" viewBox="0 0 16 14"><path d="M8 12.8 L2.3 7.6 C0.6 5.9 0.9 2.8 3.3 1.5 C5.1 0.6 6.9 1.3 8 2.8 C9.1 1.3 10.9 0.6 12.7 1.5 C15.1 2.8 15.4 5.9 13.7 7.6 Z" fill="none" stroke="#2d353c" stroke-width="1.4" stroke-linejoin="round"/></svg>
<div class="t " style="left:469.50px;top:904.45px;font-size:15.2px;color:#1f272e;font-weight:bold;">DRESS00003</div>
<div class="a" style="left:810.20px;top:898.52px;width:93.30px;height:27.00px;background:#d5e8fb;border-radius:7px;"></div>
<div class="a" style="left:821.10px;top:909.22px;width:5.00px;height:5.00px;background:#1d64b8;border-radius:50%;"></div>
<div class="t " style="left:833.30px;top:904.28px;font-size:14.1px;color:#1d68bd;font-weight:normal;-webkit-text-stroke:0.2px #1d68bd;">Delivered</div>
<div class="t " style="left:1026.80px;top:904.24px;font-size:15.1px;color:#343b42;font-weight:normal;letter-spacing:-0.05px;">Designer Dress</div>
<div class="a" style="left:1602.00px;top:911.00px;width:5.00px;height:2.00px;background:#737b82;"></div>
<div class="t " style="left:1637.20px;top:905.33px;font-size:13.1px;color:#525a62;font-weight:normal;">37 m</div>
<svg class="a" style="left:1687.00px;top:904.52px;" width="17" height="16" viewBox="0 0 17 16"><path d="M4 2 H13 A2 2 0 0 1 15 4 V10.4 A2 2 0 0 1 13 12.4 H12.8 L11.5 14.4 L8.3 12.4 H4 A2 2 0 0 1 2 10.4 V4 A2 2 0 0 1 4 2 Z" fill="none" stroke="#3f4850" stroke-width="1.3" stroke-linejoin="round"/><g stroke="#3f4850" stroke-width="1.3" stroke-linecap="round"><path d="M5 5.2 H11.4"/><path d="M5 7.6 H8.7"/></g></svg>
<div class="t " style="left:1708.90px;top:904.68px;font-size:14.1px;color:#3f4850;font-weight:normal;">0</div>
<div class="a" style="left:394.00px;top:936.72px;width:1348.00px;height:1.00px;background:#f0f1f3;"></div>
<div class="a" style="left:410.80px;top:955.13px;width:15.00px;height:15.00px;border:1px solid #c2c8cd;border-radius:4px;background:#fff;box-shadow:0 1px 2px rgba(0,0,0,0.08);"></div>
<svg class="a" style="left:443.60px;top:957.13px;" width="16" height="14" viewBox="0 0 16 14"><path d="M8 12.8 L2.3 7.6 C0.6 5.9 0.9 2.8 3.3 1.5 C5.1 0.6 6.9 1.3 8 2.8 C9.1 1.3 10.9 0.6 12.7 1.5 C15.1 2.8 15.4 5.9 13.7 7.6 Z" fill="none" stroke="#2d353c" stroke-width="1.4" stroke-linejoin="round"/></svg>
<div class="t " style="left:469.50px;top:955.66px;font-size:15.2px;color:#1f272e;font-weight:bold;">DRESS00002</div>
<div class="a" style="left:810.20px;top:949.73px;width:93.30px;height:27.00px;background:#d5e8fb;border-radius:7px;"></div>
<div class="a" style="left:821.10px;top:960.43px;width:5.00px;height:5.00px;background:#1d64b8;border-radius:50%;"></div>
<div class="t " style="left:833.30px;top:955.49px;font-size:14.1px;color:#1d68bd;font-weight:normal;-webkit-text-stroke:0.2px #1d68bd;">Delivered</div>
<div class="t " style="left:1026.80px;top:955.45px;font-size:15.1px;color:#343b42;font-weight:normal;letter-spacing:-0.05px;">Designer Dress</div>
<div class="a" style="left:1602.00px;top:963.00px;width:5.00px;height:2.00px;background:#737b82;"></div>
<div class="t " style="left:1637.20px;top:956.54px;font-size:13.1px;color:#525a62;font-weight:normal;">37 m</div>
<svg class="a" style="left:1687.00px;top:955.73px;" width="17" height="16" viewBox="0 0 17 16"><path d="M4 2 H13 A2 2 0 0 1 15 4 V10.4 A2 2 0 0 1 13 12.4 H12.8 L11.5 14.4 L8.3 12.4 H4 A2 2 0 0 1 2 10.4 V4 A2 2 0 0 1 4 2 Z" fill="none" stroke="#3f4850" stroke-width="1.3" stroke-linejoin="round"/><g stroke="#3f4850" stroke-width="1.3" stroke-linecap="round"><path d="M5 5.2 H11.4"/><path d="M5 7.6 H8.7"/></g></svg>
<div class="t " style="left:1708.90px;top:955.89px;font-size:14.1px;color:#3f4850;font-weight:normal;">0</div>
<div class="a" style="left:394.00px;top:987.93px;width:1348.00px;height:1.00px;background:#f0f1f3;"></div>
<div class="a" style="left:410.80px;top:1006.34px;width:15.00px;height:15.00px;border:1px solid #c2c8cd;border-radius:4px;background:#fff;box-shadow:0 1px 2px rgba(0,0,0,0.08);"></div>
<svg class="a" style="left:443.60px;top:1008.34px;" width="16" height="14" viewBox="0 0 16 14"><path d="M8 12.8 L2.3 7.6 C0.6 5.9 0.9 2.8 3.3 1.5 C5.1 0.6 6.9 1.3 8 2.8 C9.1 1.3 10.9 0.6 12.7 1.5 C15.1 2.8 15.4 5.9 13.7 7.6 Z" fill="none" stroke="#2d353c" stroke-width="1.4" stroke-linejoin="round"/></svg>
<div class="t " style="left:469.50px;top:1006.87px;font-size:15.2px;color:#1f272e;font-weight:bold;letter-spacing:-0.25px;">DRESS00001</div>
<div class="a" style="left:810.20px;top:1000.94px;width:93.30px;height:27.00px;background:#d5e8fb;border-radius:7px;"></div>
<div class="a" style="left:821.10px;top:1011.64px;width:5.00px;height:5.00px;background:#1d64b8;border-radius:50%;"></div>
<div class="t " style="left:833.30px;top:1006.70px;font-size:14.1px;color:#1d68bd;font-weight:normal;-webkit-text-stroke:0.2px #1d68bd;">Delivered</div>
<div class="t " style="left:1026.80px;top:1006.66px;font-size:15.1px;color:#343b42;font-weight:normal;letter-spacing:-0.05px;">Designer Dress</div>
<div class="a" style="left:1602.00px;top:1014.00px;width:5.00px;height:2.00px;background:#737b82;"></div>
<div class="t " style="left:1637.20px;top:1007.75px;font-size:13.1px;color:#525a62;font-weight:normal;">38 m</div>
<svg class="a" style="left:1687.00px;top:1006.94px;" width="17" height="16" viewBox="0 0 17 16"><path d="M4 2 H13 A2 2 0 0 1 15 4 V10.4 A2 2 0 0 1 13 12.4 H12.8 L11.5 14.4 L8.3 12.4 H4 A2 2 0 0 1 2 10.4 V4 A2 2 0 0 1 4 2 Z" fill="none" stroke="#3f4850" stroke-width="1.3" stroke-linejoin="round"/><g stroke="#3f4850" stroke-width="1.3" stroke-linecap="round"><path d="M5 5.2 H11.4"/><path d="M5 7.6 H8.7"/></g></svg>
<div class="t " style="left:1708.90px;top:1007.10px;font-size:14.1px;color:#3f4850;font-weight:normal;">0</div>
<div class="a" style="left:394.00px;top:1039.14px;width:1348.00px;height:1.00px;background:#f0f1f3;"></div>
<div class="a" style="left:410.50px;top:1058.20px;width:141.10px;height:30.00px;border:1px solid #dfe3e6;border-radius:8px;background:#fff;overflow:hidden;"></div>
<div class="a" style="left:410.50px;top:1058.20px;width:42.70px;height:30.00px;background:#687178;border-radius:8px 0 0 0;"></div>
<div class="a" style="left:501.00px;top:1058.20px;width:1.00px;height:30.00px;background:#e2e6e9;"></div>
<div class="a" style="left:1857.50px;top:0.00px;width:13.50px;height:1080.00px;background:#ededed;"></div>
<div class="a" style="left:1857.50px;top:0.00px;width:13.50px;height:966.60px;background:#c1c5cc;border-radius:7px;"></div>
<div class="a" style="left:0.00px;top:1066.50px;width:1871.00px;height:13.50px;background:#ededed;"></div>
<div class="a" style="left:0.00px;top:1066.50px;width:1851.00px;height:13.50px;background:#c1c5cc;border-radius:7px;"></div>
</body></html>
